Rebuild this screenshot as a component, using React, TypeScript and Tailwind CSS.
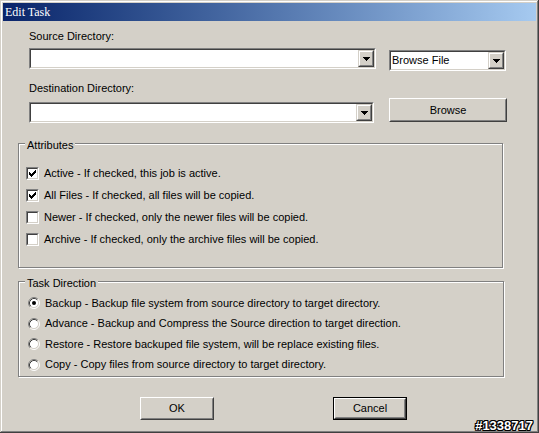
import clsx from "clsx";

const face = "bg-[#d4d0c8]";

function Arrow() {
  return (
    <svg width="7" height="4" viewBox="0 0 7 4" shapeRendering="crispEdges">
      <path d="M0 0h7v1h-1v1h-1v1h-1v1h-1v-1h-1v-1h-1v-1h-1z" fill="#000" />
    </svg>
  );
}

function DropButton() {
  return (
    <div className="flex w-[16px] border border-t-[#d4d0c8] border-l-[#d4d0c8] border-b-[#404040] border-r-[#404040]">
      <div className={clsx("flex flex-1 items-center justify-center border border-t-white border-l-white border-b-[#808080] border-r-[#808080]", face)}>
        <Arrow />
      </div>
    </div>
  );
}

function ComboBox({ className, text }: { className: string; text?: string }) {
  return (
    <div className={clsx("flex h-[21px] border border-t-[#808080] border-l-[#808080] border-b-white border-r-white", className)}>
      <div className="flex flex-1 border border-t-[#404040] border-l-[#404040] border-b-[#d4d0c8] border-r-[#d4d0c8] bg-white">
        <span className="flex flex-1 items-center pl-[1px] leading-[13px]">{text}</span>
        <DropButton />
      </div>
    </div>
  );
}

function PushButton({ label, className, isDefault }: { label: string; className: string; isDefault?: boolean }) {
  return (
    <div className={clsx("flex", isDefault && "border border-black", className)}>
      <div className="flex flex-1 border border-t-white border-l-white border-b-[#404040] border-r-[#404040]">
        <div className="flex flex-1 items-center justify-center border border-t-[#d4d0c8] border-l-[#d4d0c8] border-b-[#808080] border-r-[#808080] leading-[13px]">
          {label}
        </div>
      </div>
    </div>
  );
}

const checkCols = [2, 3, 4, 3, 2, 1, 0];

function CheckBox({ checked }: { checked?: boolean }) {
  return (
    <div className="flex h-[13px] w-[13px] border border-t-[#808080] border-l-[#808080] border-b-white border-r-white">
      <div className="flex flex-1 items-center justify-center border border-t-[#404040] border-l-[#404040] border-b-[#d4d0c8] border-r-[#d4d0c8] bg-white">
        {checked && (
          <svg width="7" height="7" viewBox="0 0 7 7" shapeRendering="crispEdges">
            {checkCols.map((y, x) => (
              <rect key={x} x={x} y={y} width="1" height="3" fill="#000" />
            ))}
          </svg>
        )}
      </div>
    </div>
  );
}

function Radio({ checked }: { checked?: boolean }) {
  return (
    <svg width="12" height="12" viewBox="0 0 12 12">
      <circle cx="6" cy="6" r="4.5" fill="#fff" />
      <path d="M2.11 9.89A5.5 5.5 0 0 1 9.89 2.11" stroke="#808080" fill="none" />
      <path d="M9.89 2.11A5.5 5.5 0 0 1 2.11 9.89" stroke="#fff" fill="none" />
      <path d="M2.82 9.18A4.5 4.5 0 0 1 9.18 2.82" stroke="#404040" fill="none" />
      <path d="M9.18 2.82A4.5 4.5 0 0 1 2.82 9.18" stroke="#d4d0c8" fill="none" />
      {checked && <circle cx="6" cy="6" r="2" fill="#000" />}
    </svg>
  );
}

function GroupBox({ title, className, children }: { title: string; className: string; children: React.ReactNode }) {
  return (
    <div className={clsx("relative ml-[15px] border border-[#808080] shadow-[1px_1px_0_#fff,inset_1px_1px_0_#fff]", className)}>
      <span className={clsx("absolute -top-[5px] left-[6px] px-[2px] leading-[13px]", face)}>{title}</span>
      {children}
    </div>
  );
}

const attributes = [
  { text: "Active - If checked, this job is active.", checked: true },
  { text: "All Files - If checked, all files will be copied.", checked: true },
  { text: "Newer - If checked, only the newer files will be copied.", checked: false },
  { text: "Archive - If checked, only the archive files will be copied.", checked: false },
];

const directions = [
  "Backup - Backup file system from source directory to target directory.",
  "Advance - Backup and Compress the Source direction to target direction.",
  "Restore - Restore backuped file system, will be replace existing files.",
  "Copy - Copy files from source directory to target directory.",
];

export default function App() {
  return (
    <div
      className={clsx(
        "relative flex h-[433px] w-[539px] flex-col p-[3px] text-[11px] text-black shadow-[inset_-1px_-1px_0_#404040,inset_1px_1px_0_#d4d0c8,inset_-2px_-2px_0_#808080,inset_2px_2px_0_#fff]",
        face
      )}
      style={{ fontFamily: '"Liberation Sans", Arial, sans-serif' }}
    >
      <div
        className="flex h-[18px] items-center bg-gradient-to-r from-[#0a246a] to-[#a6caf0] pl-[2px] text-[12px] text-white"
        style={{ fontFamily: '"Liberation Serif", "Times New Roman", serif' }}
      >
        Edit Task
      </div>

      <div className="ml-[26px] mt-[9px] leading-[13px]">Source Directory:</div>
      <div className="mt-[5px] flex h-[21px] items-start">
        <ComboBox className="ml-[26px] w-[347px]" />
        <ComboBox className="ml-[13px] mt-[2px] w-[117px]" text="Browse File" />
      </div>

      <div className="ml-[26px] mt-[13px] leading-[13px]">Destination Directory:</div>
      <div className="mt-[3px] flex items-end">
        <ComboBox className="ml-[26px] w-[345px]" />
        <PushButton label="Browse" className="mb-[1px] ml-[15px] h-[24px] w-[118px]" />
      </div>

      <GroupBox title="Attributes" className="mt-[20px] h-[125px] w-[485px]">
        <div className="flex flex-col pl-[7px] pt-[18px]">
          {attributes.map((a) => (
            <div key={a.text} className="flex h-[22px] items-center gap-[5px]">
              <CheckBox checked={a.checked} />
              <span className="leading-[13px]">{a.text}</span>
            </div>
          ))}
        </div>
      </GroupBox>

      <GroupBox title="Task Direction" className="mt-[13px] h-[96px] w-[486px]">
        <div className="flex flex-col pl-[9px] pt-[11px]">
          {directions.map((d, i) => (
            <div key={d} className="flex h-[20.5px] items-center gap-[5px]">
              <Radio checked={i === 0} />
              <span className="leading-[13px]">{d}</span>
            </div>
          ))}
        </div>
      </GroupBox>

      <div className="mt-[20px] flex">
        <PushButton label="OK" className="ml-[137px] h-[23px] w-[74px]" />
        <PushButton label="Cancel" className="ml-[119px] h-[23px] w-[74px]" isDefault />
      </div>

      <span className="absolute bottom-[1px] right-[6px] text-[13px] font-bold leading-[13px] text-white [text-shadow:1px_0_0_#000,-1px_0_0_#000,0_1px_0_#000,0_-1px_0_#000,1px_1px_0_#000,-1px_-1px_0_#000,1px_-1px_0_#000,-1px_1px_0_#000]">
        #1338717
      </span>
    </div>
  );
}
